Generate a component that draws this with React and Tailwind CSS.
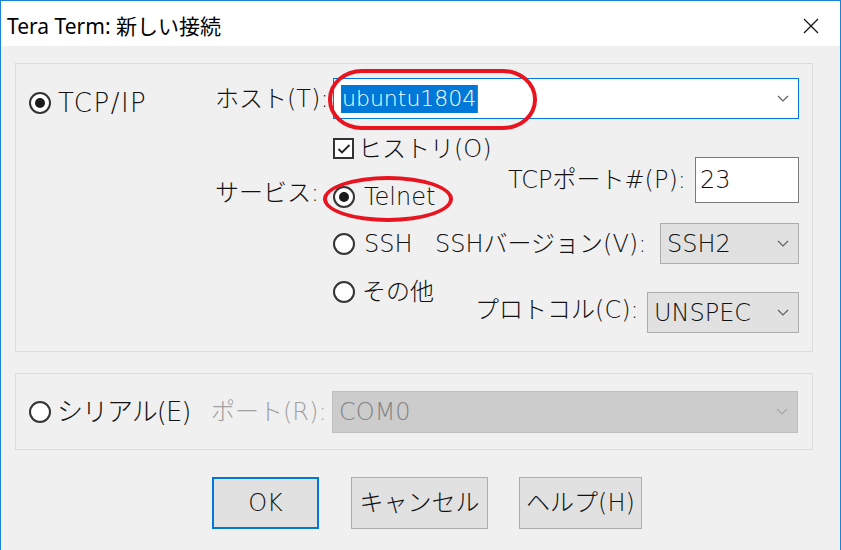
const Radio = ({ checked }) => (
  <span className="w-[22px] h-[22px] rounded-full border-2 border-[#333333] bg-white flex items-center justify-center shrink-0">
    {checked && <span className="w-[10px] h-[10px] rounded-full bg-[#1a1a1a]" />}
  </span>
);

const Chevron = ({ color = "#606060" }) => (
  <svg width="12" height="7" viewBox="0 0 12 7">
    <polyline points="1,1 6,6 11,1" fill="none" stroke={color} strokeWidth="1.2" />
  </svg>
);

const App = () => {
  return (
    <div className="relative w-[841px] h-[550px] bg-[#f0f0f0] border-x border-t border-[#1883d7] overflow-hidden text-[24px] leading-[32px] font-light text-[#111] font-['DejaVu_Sans','Noto_Sans_CJK_JP',sans-serif]">
      {/* title bar */}
      <div className="h-[45px] bg-white flex items-center justify-between pl-[6px] pr-[21px]">
        <span className="text-[21px] font-normal text-black font-['Noto_Sans','Noto_Sans_CJK_JP',sans-serif] mt-[4px]">
          Tera Term: 新しい接続
        </span>
        <svg width="16" height="16" viewBox="0 0 16 16" className="mt-[5px]">
          <path d="M1 1 L15 15 M15 1 L1 15" stroke="#111" strokeWidth="1.2" />
        </svg>
      </div>

      <div className="pl-[14px]">
        {/* TCP/IP group */}
        <div className="mt-[17px] w-[798px] h-[289px] border border-[#dcdcdc] flex">
          <div className="w-[199px] pl-[13px] pt-[27px]">
            <div className="flex items-center gap-[7px]">
              <Radio checked />
              <span className="text-[26px] leading-[24px] tracking-[1.5px]">TCP/IP</span>
            </div>
          </div>

          <div className="w-[584px] flex flex-col">
            <div className="mt-[14px] flex items-center h-[41px]">
              <span className="w-[118px]">ホスト(T):</span>
              <div className="w-[466px] h-[41px] border border-[#0078d7] bg-white flex items-center justify-between pl-[7px] pr-[9px]">
                <div className="flex items-center">
                  <span className="bg-[#0078d7] text-white text-[22px] leading-[28px] h-[28px] px-[1px]">ubuntu1804</span>
                  <span className="w-[1px] h-[28px] bg-[#c86400]" />
                </div>
                <Chevron />
              </div>
            </div>

            <div className="flex h-[89px]">
              <div className="w-[118px] pt-[58px]">
                <div className="h-[32px] leading-[32px]">サービス:</div>
              </div>
              <div className="w-[175px] flex flex-col">
                <div className="mt-[19px] flex items-center h-[21px] gap-[4px]">
                  <span className="w-[21px] h-[21px] border-2 border-[#333333] bg-white flex items-center justify-center">
                    <svg width="14" height="12" viewBox="0 0 14 12">
                      <polyline points="1.5,6 5,9.5 12.5,2" fill="none" stroke="#222" strokeWidth="1.8" />
                    </svg>
                  </span>
                  <span>ヒストリ(O)</span>
                </div>
                <div className="mt-[27px] flex items-center h-[22px] gap-[9px]">
                  <Radio checked />
                  <span>Telnet</span>
                </div>
              </div>
              <div className="mt-[38px] flex items-center h-[46px]">
                <span className="w-[187px]">TCPポート#(P):</span>
                <div className="w-[104px] h-[46px] border border-[#7a7a7a] bg-white flex items-center pl-[4px]">
                  23
                </div>
              </div>
            </div>

            <div className="mt-[15px] flex items-center h-[41px] pl-[118px]">
              <div className="w-[102px] flex items-center gap-[9px]">
                <Radio />
                <span>SSH</span>
              </div>
              <span className="w-[225px]">SSHバージョン(V):</span>
              <div className="w-[139px] h-[41px] border border-[#adadad] bg-[#e1e1e1] flex items-center justify-between pl-[6px] pr-[9px]">
                <span>SSH2</span>
                <Chevron />
              </div>
            </div>

            <div className="flex items-start pl-[118px]">
              <div className="mt-[17px] w-[143px] flex items-center h-[22px] gap-[7px]">
                <Radio />
                <span>その他</span>
              </div>
              <span className="mt-[30px] w-[173px]">プロトコル(C):</span>
              <div className="mt-[28px] w-[153px] h-[41px] border border-[#adadad] bg-[#e1e1e1] flex items-center justify-between pl-[6px] pr-[9px]">
                <span>UNSPEC</span>
                <Chevron />
              </div>
            </div>
          </div>
        </div>

        {/* serial group */}
        <div className="mt-[21px] w-[798px] h-[77px] border border-[#dcdcdc] flex items-center">
          <div className="w-[195px] pl-[13px] flex items-center gap-[6px]">
            <Radio />
            <span className="text-[26px] tracking-[-1px]">シリアル(E)</span>
          </div>
          <span className="w-[121px] text-[#a0a0a0]">ポート(R):</span>
          <div className="w-[466px] h-[42px] border border-[#bfbfbf] bg-[#cccccc] flex items-center justify-between pl-[6px] pr-[9px] text-[#838383]">
            <span>COM0</span>
            <Chevron color="#a8a8a8" />
          </div>
        </div>

        {/* buttons */}
        <div className="mt-[27px] ml-[197px] flex items-center">
          <button className="w-[107px] h-[52px] border-2 border-[#0078d7] bg-[#e1e1e1] text-[#111]">OK</button>
          <button className="ml-[32px] w-[137px] h-[52px] border border-[#adadad] bg-[#e1e1e1] text-[#111]">キャンセル</button>
          <button className="ml-[31px] w-[123px] h-[52px] border border-[#adadad] bg-[#e1e1e1] text-[#111]">ヘルプ(H)</button>
        </div>
      </div>

      {/* red annotation marks */}
      <div className="absolute left-[327px] top-[68px] w-[209px] h-[61px] border-[4px] border-[#e8141f] rounded-[34px/30px]" />
      <div className="absolute left-[322px] top-[175px] w-[130px] h-[46px] border-[4px] border-[#e8141f] rounded-[50%]" />
    </div>
  );
};

export default App;
